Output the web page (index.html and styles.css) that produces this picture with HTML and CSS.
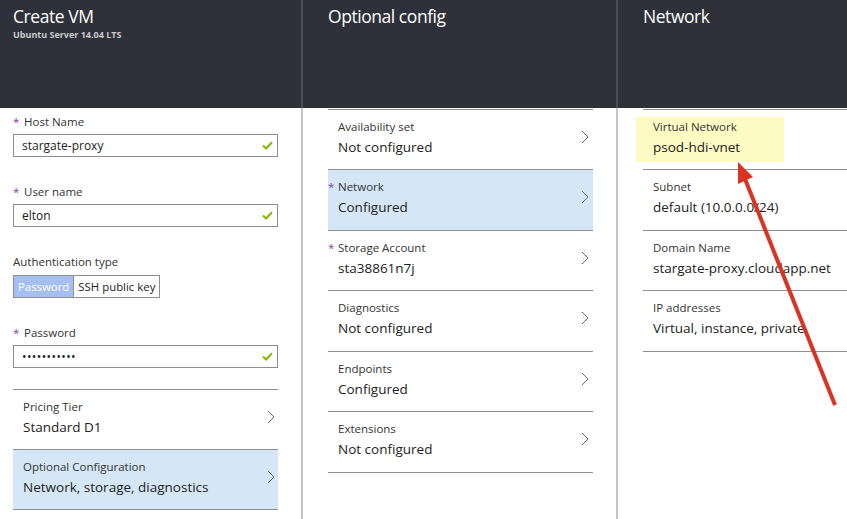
FILE: index.html
```html
<!DOCTYPE html>
<html>
<head>
<meta charset="utf-8">
<title>Create VM</title>
<link rel="stylesheet" href="styles.css">
</head>
<body>
<div class="blades">
  <section class="blade blade-create">
    <header class="blade-head">
      <h1 class="blade-title">Create VM</h1>
      <div class="blade-sub">Ubuntu Server 14.04 LTS</div>
    </header>
    <div class="blade-body">
      <div class="field">
        <div class="field-label"><span class="req">*</span>Host Name</div>
        <div class="input"><span>stargate-proxy</span><svg class="check" width="11" height="9" viewBox="0 0 11 9"><path d="M1 4.5 L4 7.5 L10 1.2"/></svg></div>
      </div>
      <div class="field">
        <div class="field-label"><span class="req">*</span>User name</div>
        <div class="input"><span>elton</span><svg class="check" width="11" height="9" viewBox="0 0 11 9"><path d="M1 4.5 L4 7.5 L10 1.2"/></svg></div>
      </div>
      <div class="field">
        <div class="field-label">Authentication type</div>
        <div class="toggle"><span class="opt on">Password</span><span class="opt">SSH public key</span></div>
      </div>
      <div class="field field-last">
        <div class="field-label"><span class="req">*</span>Password</div>
        <div class="input"><span class="dots">•••••••••••</span><svg class="check" width="11" height="9" viewBox="0 0 11 9"><path d="M1 4.5 L4 7.5 L10 1.2"/></svg></div>
      </div>
      <div class="list list-create">
        <div class="row">
          <div class="row-text"><div class="row-label">Pricing Tier</div><div class="row-value">Standard D1</div></div>
          <svg class="chev" width="8" height="14" viewBox="0 0 8 14"><path d="M1 1 L7 7 L1 13"/></svg>
        </div>
        <div class="row selected">
          <div class="row-text"><div class="row-label">Optional Configuration</div><div class="row-value">Network, storage, diagnostics</div></div>
          <svg class="chev" width="8" height="14" viewBox="0 0 8 14"><path d="M1 1 L7 7 L1 13"/></svg>
        </div>
      </div>
    </div>
  </section>

  <section class="blade blade-optional">
    <header class="blade-head">
      <h1 class="blade-title">Optional config</h1>
    </header>
    <div class="blade-body">
      <div class="list">
        <div class="row">
          <div class="row-text"><div class="row-label">Availability set</div><div class="row-value">Not configured</div></div>
          <svg class="chev" width="8" height="14" viewBox="0 0 8 14"><path d="M1 1 L7 7 L1 13"/></svg>
        </div>
        <div class="row selected">
          <span class="row-req">*</span>
          <div class="row-text"><div class="row-label">Network</div><div class="row-value">Configured</div></div>
          <svg class="chev" width="8" height="14" viewBox="0 0 8 14"><path d="M1 1 L7 7 L1 13"/></svg>
        </div>
        <div class="row">
          <span class="row-req">*</span>
          <div class="row-text"><div class="row-label">Storage Account</div><div class="row-value">sta38861n7j</div></div>
          <svg class="chev" width="8" height="14" viewBox="0 0 8 14"><path d="M1 1 L7 7 L1 13"/></svg>
        </div>
        <div class="row">
          <div class="row-text"><div class="row-label">Diagnostics</div><div class="row-value">Not configured</div></div>
          <svg class="chev" width="8" height="14" viewBox="0 0 8 14"><path d="M1 1 L7 7 L1 13"/></svg>
        </div>
        <div class="row">
          <div class="row-text"><div class="row-label">Endpoints</div><div class="row-value">Configured</div></div>
          <svg class="chev" width="8" height="14" viewBox="0 0 8 14"><path d="M1 1 L7 7 L1 13"/></svg>
        </div>
        <div class="row">
          <div class="row-text"><div class="row-label">Extensions</div><div class="row-value">Not configured</div></div>
          <svg class="chev" width="8" height="14" viewBox="0 0 8 14"><path d="M1 1 L7 7 L1 13"/></svg>
        </div>
      </div>
    </div>
  </section>

  <section class="blade blade-network">
    <header class="blade-head">
      <h1 class="blade-title">Network</h1>
    </header>
    <div class="blade-body">
      <div class="list">
        <div class="row">
          <div class="row-text hl"><div class="row-label">Virtual Network</div><div class="row-value">psod-hdi-vnet</div></div>
        </div>
        <div class="row">
          <div class="row-text"><div class="row-label">Subnet</div><div class="row-value">default (10.0.0.0/24)</div></div>
        </div>
        <div class="row">
          <div class="row-text"><div class="row-label">Domain Name</div><div class="row-value">stargate-proxy.cloudapp.net</div></div>
        </div>
        <div class="row">
          <div class="row-text"><div class="row-label">IP addresses</div><div class="row-value">Virtual, instance, private</div></div>
        </div>
      </div>
    </div>
  </section>
</div>

<svg class="annotation" width="847" height="519" viewBox="0 0 847 519">
  <line x1="835" y1="405" x2="745" y2="179" stroke="#d93322" stroke-width="4"/>
  <polygon points="738,162 753,177 738,184" fill="#d93322"/>
</svg>
</body>
</html>
```

FILE: styles.css
```css
* {
  box-sizing: border-box;
  margin: 0;
  padding: 0;
}

html, body {
  height: 100%;
}

body {
  position: relative;
  overflow: hidden;
  background: #ffffff;
  color: #222222;
  font-family: "Open Sans", "Noto Sans", sans-serif;
}

.blades {
  display: flex;
  height: 519px;
}

.blade {
  display: flex;
  flex-direction: column;
}

.blade-create {
  width: 301px;
}

.blade-optional {
  width: 315px;
}

.blade-network {
  flex: 1;
}

.blade-head {
  height: 108px;
  background: #2e3139;
  color: #ffffff;
  padding: 4px 0 0 13px;
}

.blade-optional .blade-head,
.blade-network .blade-head {
  border-left: 2px solid #4a4d55;
  padding-left: 25px;
}

.blade-title {
  font-size: 17.5px;
  font-weight: 400;
  line-height: 24px;
  letter-spacing: -0.45px;
}

.blade-sub {
  margin-top: 1px;
  font-size: 9px;
  font-weight: 700;
  line-height: 12px;
  color: #c9cacd;
}

.blade-body {
  flex: 1;
}

.blade-create .blade-body {
  padding: 6px 23px 0 13px;
}

.blade-optional .blade-body,
.blade-network .blade-body {
  border-left: 2px solid #c4c4c4;
  padding: 1px 23px 0 25px;
}

.blade-network .blade-body {
  padding-right: 0;
}

/* form fields */
.field {
  margin-bottom: 27px;
}

.field-last {
  margin-bottom: 21px;
}

.field-label {
  display: flex;
  margin-bottom: 4px;
  font-size: 11.5px;
  line-height: 16px;
  color: #333333;
}

.req {
  width: 11px;
  color: #8b3a9e;
}

.input {
  display: flex;
  align-items: center;
  justify-content: space-between;
  height: 23px;
  border: 1px solid #8e8e8e;
  padding: 0 4px 0 8px;
  font-size: 12px;
  color: #222222;
}

.dots {
  font-size: 12px;
  letter-spacing: 0.4px;
}

.check path {
  fill: none;
  stroke: #7fba00;
  stroke-width: 2;
}

.toggle {
  display: inline-flex;
  height: 23px;
  border: 1px solid #8e8e8e;
  font-size: 11.4px;
  color: #222222;
}

.opt {
  display: flex;
  align-items: center;
  padding: 0 4px;
}

.opt.on {
  background: #a5c0f0;
  color: #ffffff;
  border-right: 1px solid #8e8e8e;
}

/* lists */
.list {
  border-top: 1px solid #8f8f8f;
}

.row {
  position: relative;
  display: flex;
  align-items: flex-start;
  justify-content: space-between;
  height: 60.6px;
  border-bottom: 1px solid #8f8f8f;
  padding: 9px 4px 0 10px;
}

.row:first-child {
  height: 60px;
}

.list-create .row {
  height: 60px;
  padding-right: 3px;
}

.row.selected {
  background: #d5e7f7;
}

.row-req {
  position: absolute;
  left: 0;
  top: 9px;
  font-size: 11.5px;
  line-height: 16px;
  color: #8b3a9e;
}

.row-label {
  margin-bottom: 2px;
  font-size: 11.5px;
  line-height: 16px;
  color: #333333;
}

.row-value {
  font-size: 13.5px;
  line-height: 20px;
  color: #222222;
}

.chev {
  margin-top: 11px;
}

.chev path {
  fill: none;
  stroke: #666666;
  stroke-width: 1;
}

.hl {
  width: 148px;
  margin: -2px 0 0 -17px;
  padding: 2px 0 5px 17px;
  background: #fdfbc3;
}

.annotation {
  position: absolute;
  top: 0;
  left: 0;
  pointer-events: none;
}
```
